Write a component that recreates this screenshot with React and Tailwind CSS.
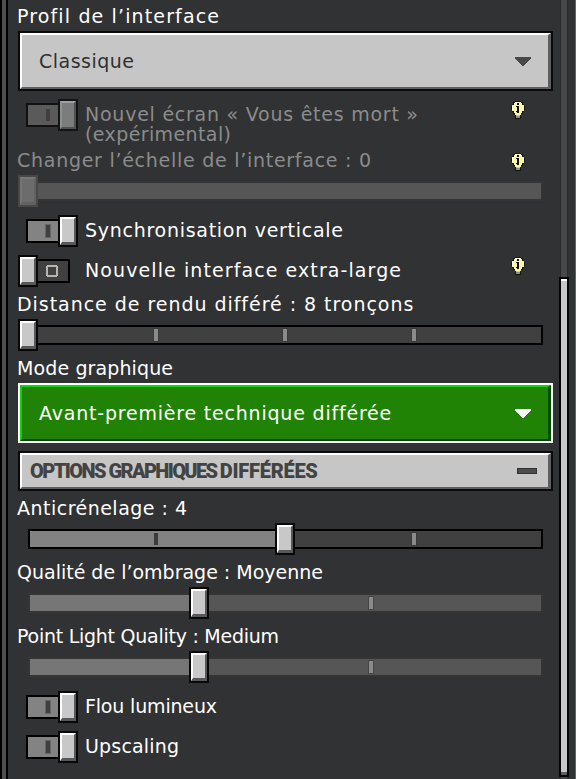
import { useLayoutEffect, useRef, useState } from "react";
import { clsx } from "clsx";

const BODY = "font-['DejaVu_Sans',sans-serif] text-[19px] leading-5";

// Text tracked so that it fills exactly `width` pixels.
function Fit({ width, children }) {
  const ref = useRef(null);
  const [spacing, setSpacing] = useState(0);
  useLayoutEffect(() => {
    const natural = ref.current.getBoundingClientRect().width;
    setSpacing((width - natural) / (children.length - 1));
  }, [width, children]);
  return (
    <span ref={ref} className="inline-block whitespace-pre" style={{ letterSpacing: spacing + "px" }}>
      {children}
    </span>
  );
}

function Bulb({ className }) {
  return (
    <svg className={clsx("shrink-0", className)} width="14" height="18" viewBox="0 0 14 18" shapeRendering="crispEdges">
      <path fill="#16160e" d="M4 0h6v1h2v2h1v2h1v4h-1v2h-1v2h-2v5H4v-5H2v-2H1V9H0V5h1V3h1V1h2z" />
      <path fill="#fbf7a8" d="M4 1h6v1h1v2h2v6h-2v2h-1v2H4v-2H3v-2H1V4h2V2h1z" />
      <path fill="#fffde0" d="M4 1h6v1H4zM1 4h1v5H1z" />
      <path fill="#111" d="M6 2h2v2H6zM6 5h2v7H6v-1H5v-1h1V6H5V5z" />
      <path fill="#8d8d8d" d="M5 14h4v3H5z" />
      <path fill="#c9c9c9" d="M5 14h4v1H5z" />
    </svg>
  );
}

function Caret({ color }) {
  return (
    <svg width="16" height="9" viewBox="0 0 16 9" shapeRendering="crispEdges" className={color}>
      <path fill="currentColor" d="M0 0h16v2h-1v1h-1v1h-1v1h-1v1h-1v1h-1v1H9v1H7V8H6V7H5V6H4V5H3V4H2V3H1V2H0z" />
    </svg>
  );
}

function Knob({ disabled, className }) {
  return (
    <div className={clsx("absolute top-0 h-8 w-5 border-2", disabled ? "border-[#484848]" : "border-[#080808]", className)}>
      <div
        className={clsx(
          "h-full w-full border-t-2 border-r-2 border-b-[3px] border-l-2",
          disabled
            ? "border-t-[#777777] border-r-[#626262] border-b-[#626262] border-l-[#747474] bg-[#6c6c6c]"
            : "border-t-white border-r-[#58585a] border-b-[#58585a] border-l-white bg-[#c8c8c9]"
        )}
      />
    </div>
  );
}

function Slider({ knob, fill, ticks = [], dim, disabled }) {
  return (
    <div className="relative h-8 w-[535px] pt-1.5 pl-2.5">
      <div className={clsx("relative h-5 w-[515px] border-2", dim ? "border-[#353536] bg-[#565656]" : "border-black bg-[#404040]")}>
        <div className={clsx("h-full", dim ? "bg-[#767676]" : "bg-[#828282]")} style={{ width: fill }} />
        {ticks.map((x) => (
          <div
            key={x}
            className={clsx("absolute top-0.5 h-3 w-1", x < fill ? "bg-[#3c3c3c]" : "bg-[#8b8b8b] outline outline-[#333]/50")}
            style={{ left: x }}
          />
        ))}
      </div>
      <div className="absolute top-0" style={{ left: knob }}>
        <Knob disabled={disabled} />
      </div>
    </div>
  );
}

function Switch({ on, disabled }) {
  return (
    <div className="relative h-8 w-[60px] shrink-0 pt-1">
      {on ? (
        <div className={clsx("ml-2 flex h-6 w-[34px] items-center border-2 pl-[18px]", disabled ? "border-[#111] bg-[#5a5a5a]" : "border-black bg-[#838383]")}>
          <div className={clsx("h-3 w-1 bg-[#404040]", !disabled && "outline outline-[#666]")} />
        </div>
      ) : (
        <div className="ml-[18px] flex h-6 w-[34px] items-center border-2 border-black bg-[#404040] pl-[8px]">
          <svg width="12" height="12" viewBox="0 0 12 12" shapeRendering="crispEdges">
            <path fill="#b5b5b5" fillRule="evenodd" d="M1 0h10v1h1v10h-1v1H1v-1H0V1h1zM2 2v8h8V2z" />
          </svg>
        </div>
      )}
      {disabled ? (
        <div className="absolute top-0 left-10 h-8 w-5 border-2 border-[#141414]">
          <div className="h-full w-full border-2 border-t-[#a0a2a2] border-r-[#505252] border-b-[#505252] border-l-[#8f9191] bg-[#7b7d7d]" />
        </div>
      ) : (
        <Knob className={on ? "left-10" : "left-0"} />
      )}
    </div>
  );
}

function ToggleRow({ lines, on, disabled, bulb }) {
  return (
    <div className={clsx("flex", disabled ? "h-11" : "mb-2 h-8")}>
      <Switch on={on} disabled={disabled} />
      <div className={clsx("ml-[7px] flex w-[426px] flex-col items-start pt-[5px]", BODY, disabled ? "text-[#8b8c8c]" : "text-white")}>
        {lines.map(([text, width]) => (
          <Fit key={text} width={width}>{text}</Fit>
        ))}
      </div>
      {bulb && <Bulb className="mt-0.5" />}
    </div>
  );
}

function Label({ text, width, disabled, bulb }) {
  return (
    <div className={clsx("flex h-8 pt-[7px]", BODY, disabled ? "text-[#8b8c8c]" : "text-white")}>
      <div className="-ml-px w-[494px]"><Fit width={width}>{text}</Fit></div>
      {bulb && <Bulb className="mt-[3px]" />}
    </div>
  );
}

export default function App() {
  return (
    <div className="flex h-[779px] w-[576px] overflow-hidden bg-[#313233]">
      <div className="h-full w-2 shrink-0 border-x-2 border-black bg-[#4f4f50]" />
      <main className="ml-2.5 w-[541px] shrink-0">
        <div className="-mt-px">
          <Label text="Profil de l’interface" width={202} />
        </div>
        <div className="h-[60px] w-[535px] border-2 border-[#0a0a0a]">
          <div className={clsx("flex h-full items-center justify-between border-t-2 border-r-[3px] border-b-2 border-l-2 border-t-white border-r-[#5e5e5e] border-b-[#5e5e5e] border-l-white bg-[#c6c6c6] pr-[17px] pl-[17px] text-[#303030]", BODY)}>
            <Fit width={95}>Classique</Fit>
            <Caret color="text-[#484848]" />
          </div>
        </div>
        <div className="h-2" />
        <ToggleRow on disabled bulb lines={[["Nouvel écran « Vous êtes mort »", 333], ["(expérimental)", 146]]} />
        <Label text="Changer l’échelle de l’interface : 0" width={354} disabled bulb />
        <Slider knob={0} fill={0} dim disabled />
        <div className="h-2" />
        <ToggleRow on lines={[["Synchronisation verticale", 258]]} />
        <div className="flex h-8">
          <ToggleRow bulb lines={[["Nouvelle interface extra-large", 316]]} />
        </div>
        <Label text="Distance de rendu différé : 8 tronçons" width={396} />
        <Slider knob={0} fill={0} ticks={[124, 253, 382]} />
        <Label text="Mode graphique" width={156} />
        <div className="h-[60px] w-[535px] border-2 border-white">
          <div className={clsx("flex h-full items-center justify-between border-t-2 border-r-[3px] border-b-2 border-l-2 border-t-[#13d30c] border-r-[#004d00] border-b-[#004600] border-l-[#13d30c] bg-[#218306] pr-[17px] pl-[17px] text-white", BODY)}>
            <Fit width={352}>Avant-première technique différée</Fit>
            <Caret color="text-white" />
          </div>
        </div>
        <div className="mt-2 h-10 w-[535px] border-2 border-[#0a0a0a]">
          <div className="flex h-full items-center justify-between border-t-2 border-r-[3px] border-b-2 border-l-2 border-t-white border-r-[#5e5e5e] border-b-[#5e5e5e] border-l-white bg-[#c6c6c6] pr-[11px] pl-2 font-[Roboto,sans-serif] text-[20px] leading-5 font-black text-[#434343]">
            <div className="flex">
              <Fit width={80}>{"OPTIONS "}</Fit>
              <Fit width={113}>{"GRAPHIQUES "}</Fit>
              <Fit width={98}>DIFFÉRÉES</Fit>
            </div>
            <div className="h-1.5 w-5 border border-[#333] bg-[#4b4b4b]" />
          </div>
        </div>
        <Label text="Anticrénelage : 4" width={170} />
        <Slider knob={257} fill={247} ticks={[124, 382]} />
        <Label text="Qualité de l’ombrage : Moyenne" width={306} />
        <Slider knob={171} fill={161} ticks={[339]} dim />
        <Label text="Point Light Quality : Medium" width={262} />
        <Slider knob={171} fill={161} ticks={[339]} dim />
        <div className="h-2" />
        <ToggleRow on lines={[["Flou lumineux", 132]]} />
        <ToggleRow on lines={[["Upscaling", 94]]} />
      </main>
      <div className="flex h-full w-[10px] shrink-0 flex-col">
        <div className="mx-px h-[277px] w-[8px] border-x border-[#292a2b] bg-[#484849]" />
        <div className="h-[500px] w-[10px] border-2 border-[#050505] bg-[#c7c7c9]">
          <div className="h-full border-t-2 border-b-[3px] border-t-white border-b-[#5e5e5e]" />
        </div>
        <div className="mx-0.5 h-0.5 bg-[#484849]" />
      </div>
      <div className="h-full w-[7px] shrink-0 border-r border-[#626364]" />
    </div>
  );
}
